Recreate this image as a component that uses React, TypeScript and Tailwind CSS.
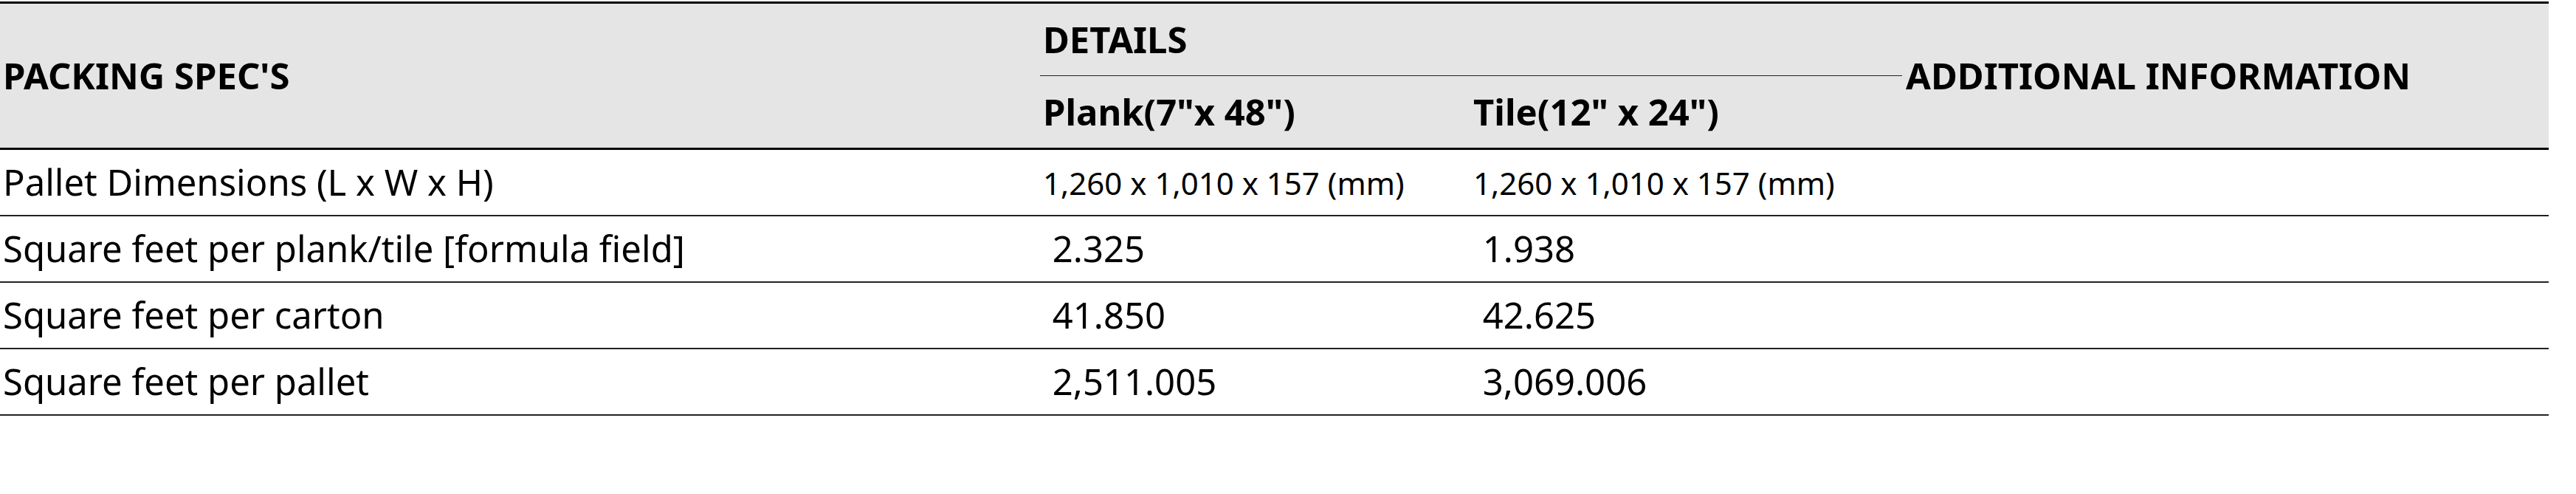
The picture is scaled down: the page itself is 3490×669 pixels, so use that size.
import React from 'react'

type SpecRow = {
  label: string
  plank: string
  tile: string
  small?: boolean
}

const rows: SpecRow[] = [
  { label: 'Pallet Dimensions (L x W x H)', plank: '1,260 x 1,010 x 157 (mm)', tile: '1,260 x 1,010 x 157 (mm)', small: true },
  { label: 'Square feet per plank/tile [formula field]', plank: '\u00a02.325', tile: '\u00a01.938' },
  { label: 'Square feet per carton', plank: '\u00a041.850', tile: '\u00a042.625' },
  { label: 'Square feet per pallet', plank: '\u00a02,511.005', tile: '\u00a03,069.006' },
]

const App: React.FC = () => {
  return (
    <div className="min-h-screen bg-white pt-[2px] font-['Noto_Sans',sans-serif] text-black">
      <table className="w-[3453px] table-fixed border-separate border-spacing-0">
        <colgroup>
          <col className="w-[1409px]" />
          <col className="w-[583px]" />
          <col className="w-[585px]" />
          <col className="w-[876px]" />
        </colgroup>
        <thead className="bg-[#e5e5e5] text-[49px] font-bold">
          <tr>
            <th
              rowSpan={2}
              className="border-t-[3px] border-b-[3px] border-black px-[4px] text-left align-middle"
            >
              PACKING SPEC'S
            </th>
            <th
              colSpan={2}
              className="h-[101px] border-t-[3px] border-b border-t-black border-b-[#222] px-[4px] text-left align-middle"
            >
              DETAILS
            </th>
            <th
              rowSpan={2}
              className="border-t-[3px] border-b-[3px] border-black px-[5px] text-left align-middle"
            >
              ADDITIONAL INFORMATION
            </th>
          </tr>
          <tr>
            <th className="h-[100px] border-b-[3px] border-black px-[4px] text-left align-middle">
              Plank(7"x 48")
            </th>
            <th className="h-[100px] border-b-[3px] border-black px-[4px] text-left align-middle">
              Tile(12" x 24")
            </th>
          </tr>
        </thead>
        <tbody className="text-[49px]">
          {rows.map(row => (
            <tr key={row.label}>
              <td className="h-[90px] border-b-2 border-[#222] px-[4px] align-middle">{row.label}</td>
              <td className={`h-[90px] border-b-2 border-[#222] px-[4px] align-middle ${row.small ? 'text-[42px]' : ''}`}>
                {row.plank}
              </td>
              <td className={`h-[90px] border-b-2 border-[#222] px-[4px] align-middle ${row.small ? 'text-[42px]' : ''}`}>
                {row.tile}
              </td>
              <td className="h-[90px] border-b-2 border-[#222] px-[5px] align-middle"></td>
            </tr>
          ))}
        </tbody>
      </table>
    </div>
  )
}

export default App
